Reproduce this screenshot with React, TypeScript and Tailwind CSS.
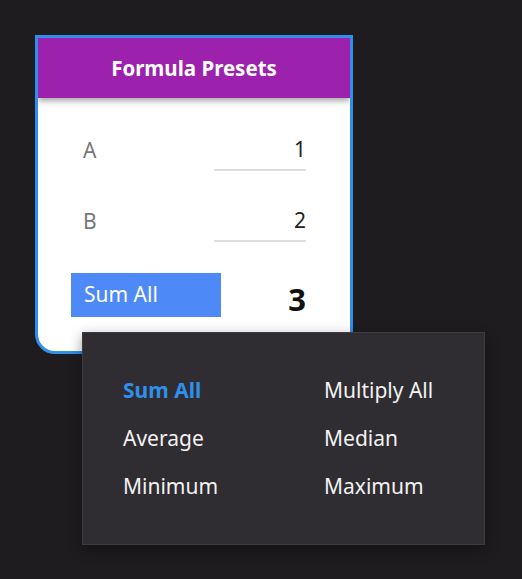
import React from "react";

export default function App() {
  const font = { fontFamily: '"Noto Sans", "Open Sans", sans-serif' };
  return (
    <div className="min-h-[579px] w-[522px] bg-[#1e1c1f] pl-[35px] pt-[35px] relative" style={font}>
      <div className="w-[318px] h-[319px] border-[3px] border-[#2f8fea] rounded-b-[20px] bg-white overflow-hidden flex flex-col">
        <div className="h-[60px] bg-[#9c21ad] flex items-center justify-center text-white font-bold text-[20.5px] shadow-[0_3px_6px_rgba(0,0,0,0.35)] relative z-10">
          Formula Presets
        </div>
        <div className="flex flex-col pl-[33px] pr-[44px] pt-[33px] gap-[31px]">
          <div className="flex items-center justify-between h-[40px]">
            <span className="text-[21px] text-[#777] pl-[12px]">A</span>
            <div className="w-[92px] h-[40px] border-b-2 border-[#dddddd] flex items-center justify-end text-[21px] text-[#222]">1</div>
          </div>
          <div className="flex items-center justify-between h-[40px]">
            <span className="text-[21px] text-[#777] pl-[12px]">B</span>
            <div className="w-[92px] h-[40px] border-b-2 border-[#dddddd] flex items-center justify-end text-[21px] text-[#222]">2</div>
          </div>
          <div className="flex items-center justify-between h-[44px]">
            <div className="w-[150px] h-[44px] bg-[#4d8af7] text-white text-[21px] flex items-center pl-[13px]">Sum All</div>
            <span className="text-[31px] font-bold text-[#111] leading-none pt-[8px]">3</span>
          </div>
        </div>
      </div>
      <div className="absolute left-[82px] top-[332px] w-[403px] h-[213px] bg-[#2f2d31] border border-[#3d3c40] shadow-[0_4px_12px_rgba(0,0,0,0.4)] grid grid-cols-[201px_1fr] content-start pt-[43px] pl-[40px] gap-y-[18px] text-[21px] text-[#f2f2f2]">
        <div className="h-[30px] flex items-center font-bold text-[#2f8fea]">Sum All</div>
        <div className="h-[30px] flex items-center">Multiply All</div>
        <div className="h-[30px] flex items-center">Average</div>
        <div className="h-[30px] flex items-center">Median</div>
        <div className="h-[30px] flex items-center">Minimum</div>
        <div className="h-[30px] flex items-center">Maximum</div>
      </div>
    </div>
  );
}
